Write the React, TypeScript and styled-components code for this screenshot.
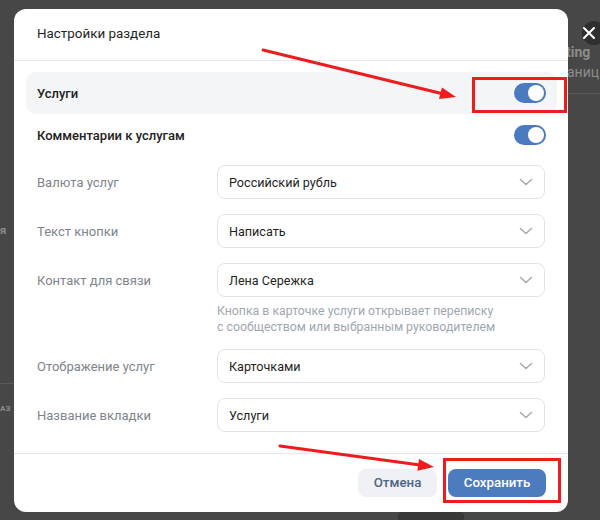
import React from 'react';
import styled, { createGlobalStyle } from 'styled-components';

const GlobalStyle = createGlobalStyle`
  html, body {
    margin: 0;
    padding: 0;
    background: #474747;
  }
  body {
    font-family: Roboto, "Noto Sans", "Liberation Sans", sans-serif;
    -webkit-font-smoothing: antialiased;
  }
  * { box-sizing: border-box; }
`;

const Page = styled.div`
  position: relative;
  width: 600px;
  height: 520px;
  overflow: hidden;
  padding: 9px 0 0 14px;
  background: #474747;
`;

// fragments of the dimmed page behind the dialog
const BehindText = styled.span<{ $x: number; $y: number; $bold?: boolean; $size?: number }>`
  position: absolute;
  left: ${(p) => p.$x}px;
  top: ${(p) => p.$y}px;
  font-size: ${(p) => p.$size ?? 14}px;
  font-weight: ${(p) => (p.$bold ? 700 : 400)};
  color: #8c8c8c;
  white-space: nowrap;
`;

const BehindLine = styled.div<{ $x: number; $y: number; $w: number }>`
  position: absolute;
  left: ${(p) => p.$x}px;
  top: ${(p) => p.$y}px;
  width: ${(p) => p.$w}px;
  height: 1px;
  background: #585858;
`;

const BehindBlob = styled.div`
  position: absolute;
  left: 398px;
  top: 512px;
  width: 66px;
  height: 10px;
  border-radius: 4px;
  background: #383838;
`;

const CloseButton = styled.div`
  position: absolute;
  left: 582px;
  top: 21px;
  width: 24px;
  height: 24px;
  border-radius: 50%;
  background: #2f2f2f;
  display: flex;
  align-items: center;
  justify-content: center;
  padding-right: 10px;
`;

const Modal = styled.div`
  position: relative;
  width: 554px;
  height: 503px;
  background: #fff;
  border-radius: 12px;
  display: flex;
  flex-direction: column;
  overflow: hidden;
`;

const Header = styled.div`
  height: 52px;
  padding: 0 23px 3px;
  display: flex;
  align-items: center;
  font-size: 13.4px;
  color: #1f1f1f;
  border-bottom: 1px solid #e7e8ec;
`;

const Body = styled.div`
  flex: 1;
  padding: 11px 11px 0 12px;
  display: flex;
  flex-direction: column;
`;

const ToggleRow = styled.div<{ $active?: boolean }>`
  height: 42px;
  padding: 0 11px;
  border-radius: 10px;
  background: ${(p) => (p.$active ? '#f4f5f7' : 'transparent')};
  display: flex;
  align-items: center;
  justify-content: space-between;
  font-size: 13px;
  font-weight: 500;
  color: #222;
`;

const Toggle = styled.div<{ $on?: boolean }>`
  width: 32px;
  height: 20px;
  border-radius: 10px;
  background: ${(p) => (p.$on ? '#4a7abf' : '#d7dce2')};
  display: flex;
  align-items: center;
  justify-content: ${(p) => (p.$on ? 'flex-end' : 'flex-start')};
  padding: 2px;
  &::after {
    content: '';
    width: 16px;
    height: 16px;
    border-radius: 50%;
    background: #fff;
  }
`;

const Form = styled.div`
  padding: 9px 12px 0 11px;
  display: grid;
  grid-template-columns: 180px 1fr;
  row-gap: 15px;
  align-items: center;
`;

const Label = styled.div`
  font-size: 13px;
  color: #7e848b;
`;

const Select = styled.div`
  height: 34px;
  border: 1px solid #dfe3e8;
  border-radius: 8px;
  background: #fff;
  padding: 0 11px 0 11px;
  display: flex;
  align-items: center;
  justify-content: space-between;
  font-size: 12.6px;
  color: #1f1f1f;
`;

const Hint = styled.div`
  grid-column: 2;
  margin-top: -9px;
  margin-bottom: -1px;
  font-size: 12.3px;
  line-height: 16px;
  color: #a0a7b0;
`;

const Footer = styled.div`
  height: 59px;
  border-top: 1px solid #e7e8ec;
  padding: 0 22px 1px;
  display: flex;
  align-items: center;
  justify-content: flex-end;
  gap: 11px;
`;

const Button = styled.button<{ $primary?: boolean }>`
  height: 28px;
  padding: 0;
  width: ${(p) => (p.$primary ? 98 : 79)}px;
  border: none;
  border-radius: 8px;
  font-family: inherit;
  font-size: 13.3px;
  font-weight: 500;
  background: ${(p) => (p.$primary ? '#4c7cbd' : '#eff1f4')};
  color: ${(p) => (p.$primary ? '#fff' : '#4d6589')};
`;

const Annotations = styled.svg`
  position: absolute;
  left: 0;
  top: 0;
  pointer-events: none;
`;

const Chevron = () => (
  <svg width="14" height="8" viewBox="0 0 14 8">
    <path d="M1.5 1.5 L7 6.5 L12.5 1.5" fill="none" stroke="#a3abb5" strokeWidth="1.6" strokeLinecap="round" strokeLinejoin="round" />
  </svg>
);

const Arrow = ({ x1, y1, x2, y2 }: { x1: number; y1: number; x2: number; y2: number }) => {
  const a = Math.atan2(y2 - y1, x2 - x1);
  const len = 16;
  const half = 6;
  const bx = x2 - len * Math.cos(a);
  const by = y2 - len * Math.sin(a);
  const px = -Math.sin(a) * half;
  const py = Math.cos(a) * half;
  return (
    <g>
      <line x1={x1} y1={y1} x2={bx} y2={by} stroke="#ee1c1c" strokeWidth="3" strokeLinecap="round" />
      <polygon points={`${x2},${y2} ${bx + px},${by + py} ${bx - px},${by - py}`} fill="#ee1c1c" />
    </g>
  );
};

const fields = [
  { label: 'Валюта услуг', value: 'Российский рубль' },
  { label: 'Текст кнопки', value: 'Написать' },
  { label: 'Контакт для связи', value: 'Лена Сережка', hint: true },
  { label: 'Отображение услуг', value: 'Карточками' },
  { label: 'Название вкладки', value: 'Услуги' },
];

export default function App() {
  return (
    <>
      <GlobalStyle />
      <Page>
        <BehindText $x={566} $y={44} $bold>ting</BehindText>
        <BehindText $x={567} $y={64}>аниц</BehindText>
        <BehindLine $x={568} $y={93} $w={32} />
        <BehindText $x={0} $y={224} $bold $size={11}>я</BehindText>
        <BehindLine $x={0} $y={383} $w={14} />
        <BehindText $x={0} $y={404} $bold $size={8}>АЗ</BehindText>
        <BehindBlob />
        <CloseButton>
          <svg width="12" height="12" viewBox="0 0 12 12">
            <path d="M1 1 L11 11 M11 1 L1 11" stroke="#fff" strokeWidth="2" strokeLinecap="round" />
          </svg>
        </CloseButton>

        <Modal>
          <Header>Настройки раздела</Header>
          <Body>
            <ToggleRow $active>
              Услуги
              <Toggle $on />
            </ToggleRow>
            <ToggleRow>
              Комментарии к услугам
              <Toggle $on />
            </ToggleRow>
            <Form>
              {fields.map((f) => (
                <React.Fragment key={f.label}>
                  <Label>{f.label}</Label>
                  <Select>
                    {f.value}
                    <Chevron />
                  </Select>
                  {f.hint && (
                    <Hint>
                      Кнопка в карточке услуги открывает переписку
                      <br />
                      с сообществом или выбранным руководителем
                    </Hint>
                  )}
                </React.Fragment>
              ))}
            </Form>
          </Body>
          <Footer>
            <Button>Отмена</Button>
            <Button $primary>Сохранить</Button>
          </Footer>
        </Modal>

        <Annotations width="600" height="520" viewBox="0 0 600 520">
          <rect x="473.5" y="78.5" width="92" height="33" fill="none" stroke="#ee1c1c" strokeWidth="3" />
          <rect x="444.5" y="459.5" width="115" height="42" fill="none" stroke="#ee1c1c" strokeWidth="3" />
          <Arrow x1={263} y1={50} x2={456} y2={97} />
          <Arrow x1={280} y1={446} x2={434} y2={467} />
        </Annotations>
      </Page>
    </>
  );
}
